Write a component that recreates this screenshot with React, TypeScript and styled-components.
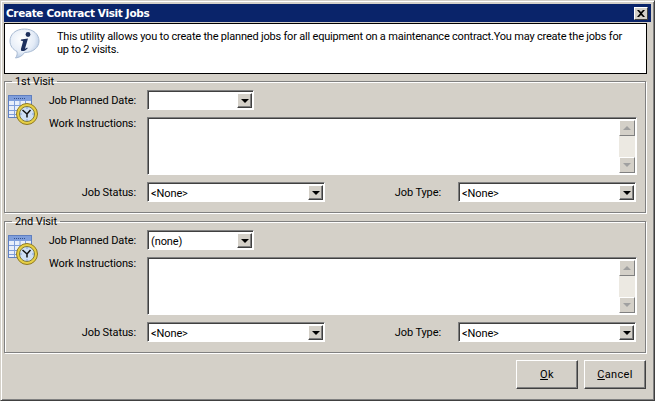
import React from 'react';
import styled, { createGlobalStyle } from 'styled-components';

const GlobalStyle = createGlobalStyle`
  html, body { margin: 0; padding: 0; background: #d4d0c8; }
  body { font-family: Roboto, "Liberation Sans", sans-serif; font-size: 11px; letter-spacing: -0.1px; color: #000; }
`;

const Dialog = styled.div`
  box-sizing: border-box;
  width: 655px;
  height: 401px;
  background: #d4d0c8;
  padding: 3px;
  border-top: 1px solid #d4d0c8;
  border-left: 1px solid #d4d0c8;
  border-right: 1px solid #404040;
  border-bottom: 1px solid #404040;
  box-shadow: inset 1px 1px 0 #fff, inset -1px -1px 0 #808080;
  display: flex;
  flex-direction: column;
`;

const TitleBar = styled.div`
  height: 18px;
  background: #0a246a;
  display: flex;
  align-items: center;
  justify-content: space-between;
  padding: 0 3px 0 2px;
  flex: none;
`;

const TitleText = styled.span`
  color: #fff;
  font-family: "DejaVu Sans", sans-serif;
  font-weight: 700;
  font-size: 10.5px;
  letter-spacing: -0.35px;
`;

const CloseButton = styled.button`
  box-sizing: border-box;
  width: 14px;
  height: 13px;
  padding: 0;
  border: 1px solid;
  border-color: #fff #404040 #404040 #fff;
  background: #d4d0c8;
  display: flex;
  align-items: center;
  justify-content: center;
`;

const InfoPanel = styled.div`
  box-sizing: border-box;
  height: 51px;
  width: 643px;
  margin-top: 1px;
  background: #fff;
  border: 1px solid #000;
  display: flex;
  flex: none;
`;

const InfoIconSlot = styled.div`
  width: 52px;
  flex: none;
  padding: 4px 0 0 4px;
  box-sizing: border-box;
`;

const InfoText = styled.p`
  margin: 6px 0 0;
  width: 572px;
  line-height: 13px;
  letter-spacing: -0.2px;
`;

const VisitGroup = styled.fieldset<{ $top: number }>`
  box-sizing: border-box;
  margin: ${(p) => p.$top}px 0 0 0;
  width: 642px;
  height: 138px;
  padding: 0;
  border: 1px solid #808080;
  box-shadow: 1px 1px 0 #fff, inset 1px 1px 0 #fff;
  flex: none;
  position: relative;
`;

const GroupLegend = styled.legend`
  margin-left: 7px;
  padding: 0 3px;
  line-height: 14px;
  height: 12px;
`;

const GroupIcon = styled.div`
  position: absolute;
  top: 6px;
  left: 2px;
  line-height: 0;
`;

const Row = styled.div<{ $gap: number }>`
  display: flex;
  align-items: flex-start;
  margin-top: ${(p) => p.$gap}px;
`;

const FieldLabel = styled.label<{ $width: number; $pad?: number; $compact?: boolean }>`
  box-sizing: border-box;
  width: ${(p) => p.$width}px;
  height: ${(p) => (p.$compact ? 14 : 20)}px;
  padding-right: ${(p) => p.$pad ?? 11}px;
  text-align: right;
  line-height: ${(p) => (p.$compact ? 14 : 22)}px;
  flex: none;
`;

const SunkenField = styled.div<{ $width: number }>`
  box-sizing: border-box;
  width: ${(p) => p.$width}px;
  height: 20px;
  background: #fff;
  border: 1px solid;
  border-color: #808080 #fff #fff #808080;
  box-shadow: inset 1px 1px 0 #404040;
  display: flex;
  justify-content: space-between;
  align-items: stretch;
  padding: 2px 1px 1px 2px;
  flex: none;
`;

const FieldValue = styled.span`
  padding-left: 1px;
  line-height: 18px;
  height: 16px;
`;

const DropButton = styled.span`
  box-sizing: border-box;
  width: 15px;
  background: #d4d0c8;
  border: 1px solid;
  border-color: #fff #404040 #404040 #fff;
  box-shadow: inset -1px -1px 0 #808080;
  display: flex;
  align-items: center;
  justify-content: center;
`;

const Arrow = styled.span<{ $up?: boolean; $muted?: boolean }>`
  width: 0;
  height: 0;
  border-left: 4px solid transparent;
  border-right: 4px solid transparent;
  ${(p) => (p.$up ? 'border-bottom' : 'border-top')}: 4px solid ${(p) => (p.$muted ? '#a0a0a0' : '#000')};
`;

const TextArea = styled.div`
  box-sizing: border-box;
  width: 490px;
  height: 58px;
  background: #fff;
  border: 1px solid;
  border-color: #808080 #fff #fff #808080;
  box-shadow: inset 1px 1px 0 #404040;
  display: flex;
  justify-content: flex-end;
  padding: 2px 1px 1px 2px;
  flex: none;
`;

const ScrollBar = styled.div`
  width: 16px;
  background: #ece9e2;
  display: flex;
  flex-direction: column;
  justify-content: space-between;
`;

const ScrollButton = styled.span`
  box-sizing: border-box;
  height: 16px;
  background: #d4d0c8;
  border: 1px solid;
  border-color: #fff #808080 #808080 #fff;
  display: flex;
  align-items: center;
  justify-content: center;
`;

const Footer = styled.div`
  display: flex;
  justify-content: flex-end;
  gap: 6px;
  margin-top: 7px;
  width: 642px;
`;

const PushButton = styled.button`
  box-sizing: border-box;
  width: 62px;
  height: 29px;
  padding: 0;
  background: #d4d0c8;
  border: 1px solid;
  border-color: #fff #404040 #404040 #fff;
  box-shadow: inset -1px -1px 0 #808080;
  font: 11px Roboto, "Liberation Sans", sans-serif;
  letter-spacing: 0.3px;
  color: #000;
  u { text-underline-offset: 1px; }
`;

const InfoBubble = () => (
  <svg width="31" height="31" viewBox="0 0 31 31">
    <defs>
      <radialGradient id="bubble" cx="0.4" cy="0.35" r="0.75">
        <stop offset="0" stopColor="#ffffff" />
        <stop offset="0.6" stopColor="#e4ecf7" />
        <stop offset="1" stopColor="#a3bbdb" />
      </radialGradient>
    </defs>
    <path
      d="M15.500 1C7 1 1 6 1 13c0 5 3 8.500 7 10.500 .5 2.500 0 4.500-1.500 6.500 3.500-.5 7-2 9-5.500C24 24.500 30 19.500 30 13 30 6 24 1 15.500 1z"
      fill="url(#bubble)"
      stroke="#a9bbd3"
    />
    <circle cx="19" cy="6.500" r="2.400" fill="#1c2f5c" />
    <path d="M12 11.500l7-1-2.800 9.500c-.2 .9 .5 .9 2-.4l.5 .6c-1.800 2-3.500 2.800-5 2.800-1.600 0-2-.9-1.700-2.300l1.900-6.800c.2-.9-.2-1.100-2.100-1.100z" fill="#1c2f5c" />
  </svg>
);

const CalendarClock = () => (
  <svg width="32" height="32" viewBox="0 0 32 32">
    <rect x="1.500" y="2.500" width="23" height="22" fill="#e8eefa" stroke="#5f7fc0" />
    <rect x="2" y="3" width="22" height="5" fill="#7f9edb" />
    <path d="M7.500 8v16M13 8v16M18.500 8v16M2 12.500h22M2 17.500h22M2 21.500h22" stroke="#7f9edb" fill="none" />
    <path d="M7 5.500h11" stroke="#33518f" strokeDasharray="1 1" />
    <circle cx="20" cy="21" r="10.500" fill="#e7cf45" stroke="#8f7a22" />
    <circle cx="20" cy="21" r="7.500" fill="#cfe0f5" stroke="#7d7a3c" />
    <path d="M15.500 17l4.500 4 3.500-4M20 21v3.500" stroke="#111" strokeWidth="1.500" fill="none" />
    <path d="M20 14.500v1M20 26.500v1M13.500 21h1M25.500 21h1" stroke="#3b62b0" />
  </svg>
);

const Combo = ({ width, value }: { width: number; value?: string }) => (
  <SunkenField $width={width}>
    <FieldValue>{value}</FieldValue>
    <DropButton>
      <Arrow />
    </DropButton>
  </SunkenField>
);

const Visit = ({ title, date, top }: { title: string; date?: string; top: number }) => (
  <VisitGroup $top={top}>
    <GroupLegend>{title}</GroupLegend>
    <GroupIcon>
      <CalendarClock />
    </GroupIcon>
    <Row $gap={3}>
      <FieldLabel $width={142}>Job Planned Date:</FieldLabel>
      <Combo width={107} value={date} />
    </Row>
    <Row $gap={7}>
      <FieldLabel $width={142} $compact>
        Work Instructions:
      </FieldLabel>
      <TextArea>
        <ScrollBar>
          <ScrollButton>
            <Arrow $up $muted />
          </ScrollButton>
          <ScrollButton>
            <Arrow $muted />
          </ScrollButton>
        </ScrollBar>
      </TextArea>
    </Row>
    <Row $gap={7}>
      <FieldLabel $width={142}>Job Status:</FieldLabel>
      <Combo width={178} value="<None>" />
      <FieldLabel $width={133} $pad={17}>
        Job Type:
      </FieldLabel>
      <Combo width={178} value="<None>" />
    </Row>
  </VisitGroup>
);

export default function App() {
  return (
    <Dialog>
      <GlobalStyle />
      <TitleBar>
        <TitleText>Create Contract Visit Jobs</TitleText>
        <CloseButton aria-label="Close">
          <svg width="8" height="7" viewBox="0 0 8 7">
            <path d="M0 0l2 0 2 2 2-2 2 0-3 3.500 3 3.500-2 0-2-2-2 2-2 0 3-3.500z" fill="#000" />
          </svg>
        </CloseButton>
      </TitleBar>
      <InfoPanel>
        <InfoIconSlot>
          <InfoBubble />
        </InfoIconSlot>
        <InfoText>
          This utility allows you to create the planned jobs for all equipment on a maintenance contract.You may create
          the jobs for up to 2 visits.
        </InfoText>
      </InfoPanel>
      <Visit title="1st Visit" top={1} />
      <Visit title="2nd Visit" date="(none)" top={2} />
      <Footer>
        <PushButton>
          <u>O</u>k
        </PushButton>
        <PushButton>
          <u>C</u>ancel
        </PushButton>
      </Footer>
    </Dialog>
  );
}
